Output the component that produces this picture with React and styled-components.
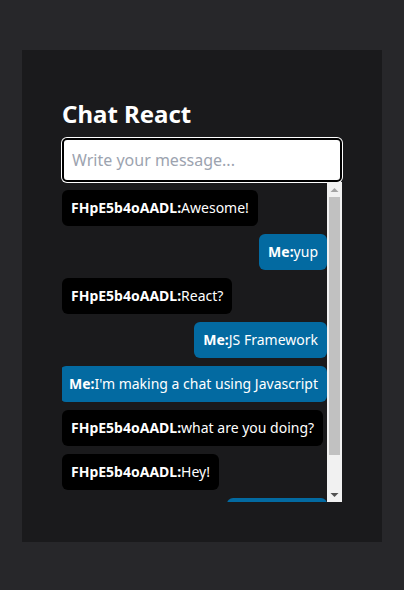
import React from "react";
import styled, { createGlobalStyle } from "styled-components";

const GlobalStyle = createGlobalStyle`
  html, body {
    margin: 0;
    padding: 0;
    background: #27272a;
    font-family: "Noto Sans", "Open Sans", sans-serif;
  }
  #root { min-height: 590px; padding-top: 50px; box-sizing: border-box; }
`;

const Card = styled.div`
  width: 360px;
  height: 492px;
  margin: 0 auto;
  box-sizing: border-box;
  padding: 40px;
  background: #1a1a1c;
  display: flex;
  flex-direction: column;
`;

const Title = styled.h1`
  margin: 7px 0 8px;
  font-size: 24px;
  line-height: 33px;
  font-weight: 700;
  color: #ffffff;
`;

const Input = styled.input`
  height: 44px;
  width: 100%;
  box-sizing: border-box;
  border: 2px solid #000;
  border-radius: 5px;
  box-shadow: 0 0 0 1px #ffffff;
  background: #fff;
  padding: 0 8px;
  font-family: inherit;
  font-size: 16px;
  color: #111;
  outline: none;
  &::placeholder { color: #9ca3af; }
`;

const ListFrame = styled.div`
  height: 320px;
  display: flex;
  flex-direction: row;
`;

const List = styled.div`
  flex: 1;
  min-width: 0;
  overflow: hidden;
  box-sizing: border-box;
  padding: 8px 0;
  display: flex;
  flex-direction: column;
  gap: 8px;
`;

const ScrollBar = styled.div`
  width: 15px;
  flex: none;
  background: #f1f1f1;
  display: flex;
  flex-direction: column;
`;

const ScrollButton = styled.div`
  height: 15px;
  flex: none;
  display: flex;
  align-items: center;
  justify-content: center;
`;

const Track = styled.div`
  flex: 1;
  padding: 0 2px;
`;

const Thumb = styled.div`
  background: #c1c1c1;
`;

const Arrow = ({ up, color }) => (
  <svg width="9" height="6" viewBox="0 0 9 6">
    {up ? (
      <polygon points="0.5,5 4.5,1 8.5,5" fill={color} />
    ) : (
      <polygon points="0.5,1 4.5,5 8.5,1" fill={color} />
    )}
  </svg>
);

const Bubble = styled.div`
  align-self: ${(p) => (p.$mine ? "flex-end" : "flex-start")};
  background: ${(p) => (p.$mine ? "#036aa1" : "#000000")};
  color: #ffffff;
  border-radius: 6px;
  padding: 8px 9px;
  font-size: 14px;
  line-height: 20px;
  white-space: nowrap;
  flex: none;
`;

const Name = styled.b`
  font-weight: 700;
`;

const messages = [
  { user: "FHpE5b4oAADL", text: "Awesome!" },
  { user: "Me", text: "yup", mine: true },
  { user: "FHpE5b4oAADL", text: "React?" },
  { user: "Me", text: "JS Framework", mine: true },
  { user: "Me", text: "I'm making a chat using Javascript", mine: true },
  { user: "FHpE5b4oAADL", text: "what are you doing?" },
  { user: "FHpE5b4oAADL", text: "Hey!" },
  { user: "Me", text: "Hi there!", mine: true },
];

export default function App() {
  const visible = 320;
  const content = 8 + messages.length * 36 + (messages.length - 1) * 8 + 8;
  const trackLen = visible - 30;
  const thumb = Math.round((trackLen * visible) / content);
  return (
    <>
      <GlobalStyle />
      <Card>
        <Title>Chat React</Title>
        <Input placeholder="Write your message..." />
        <ListFrame>
          <List>
            {messages.map((m, i) => (
              <Bubble key={i} $mine={m.mine}>
                <Name>{m.user}:</Name>
                {m.text}
              </Bubble>
            ))}
          </List>
          <ScrollBar>
            <ScrollButton>
              <Arrow up color="#a3a3a3" />
            </ScrollButton>
            <Track>
              <Thumb style={{ height: thumb }} />
            </Track>
            <ScrollButton>
              <Arrow color="#505050" />
            </ScrollButton>
          </ScrollBar>
        </ListFrame>
      </Card>
    </>
  );
}
